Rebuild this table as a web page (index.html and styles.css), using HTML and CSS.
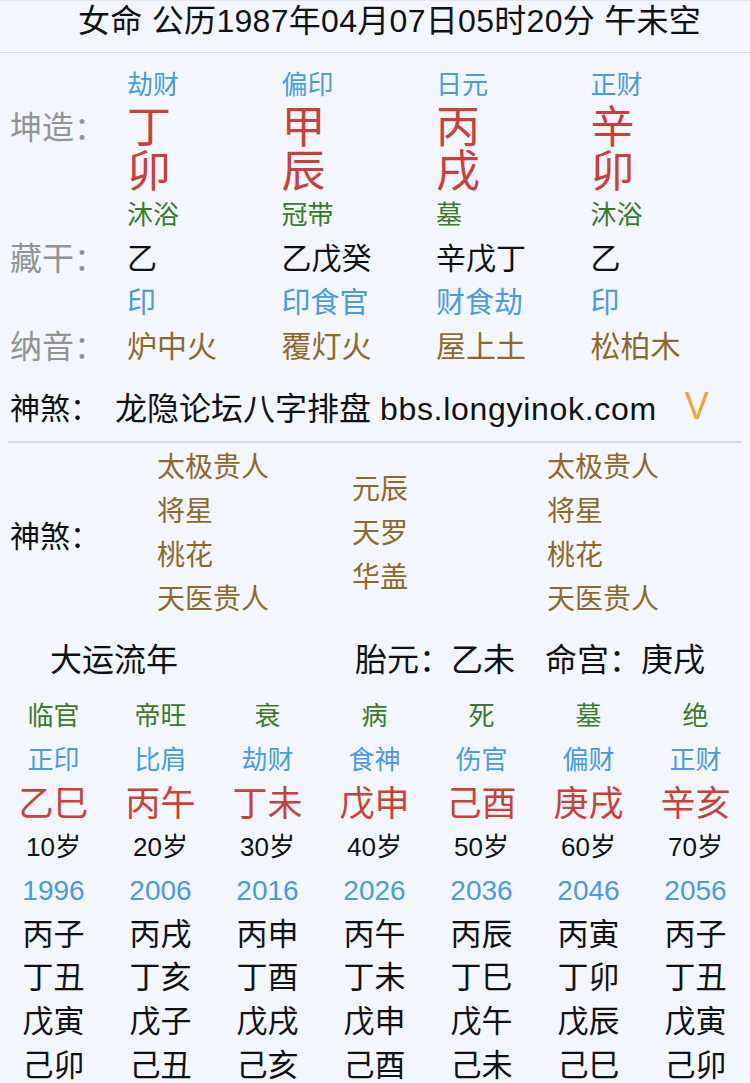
FILE: index.html
```html
<!DOCTYPE html>
<html lang="zh">
<head>
<meta charset="utf-8">
<title>八字排盘</title>
<link rel="stylesheet" href="styles.css">
</head>
<body>
<div class="page">
  <header class="title">女命 公历1987年04月07日05时20分 午未空</header>

  <section class="pillars">
    <div class="row r1">
      <div class="lbl"></div>
      <div class="c blue">劫财</div><div class="c blue">偏印</div><div class="c blue">日元</div><div class="c blue">正财</div>
    </div>
    <div class="row r2">
      <div class="lbl gray">坤造：</div>
      <div class="c red big">丁</div><div class="c red big">甲</div><div class="c red big">丙</div><div class="c red big">辛</div>
    </div>
    <div class="row r3">
      <div class="lbl"></div>
      <div class="c red big">卯</div><div class="c red big">辰</div><div class="c red big">戌</div><div class="c red big">卯</div>
    </div>
    <div class="row r4">
      <div class="lbl"></div>
      <div class="c green">沐浴</div><div class="c green">冠带</div><div class="c green">墓</div><div class="c green">沐浴</div>
    </div>
    <div class="row r5">
      <div class="lbl gray">藏干：</div>
      <div class="c black">乙</div><div class="c black">乙戊癸</div><div class="c black">辛戊丁</div><div class="c black">乙</div>
    </div>
    <div class="row r6">
      <div class="lbl"></div>
      <div class="c blue">印</div><div class="c blue">印食官</div><div class="c blue">财食劫</div><div class="c blue">印</div>
    </div>
    <div class="row r7">
      <div class="lbl gray">纳音：</div>
      <div class="c brown">炉中火</div><div class="c brown">覆灯火</div><div class="c brown">屋上土</div><div class="c brown">松柏木</div>
    </div>
  </section>

  <div class="link-row">
    <span class="link-lbl">神煞：</span>
    <span class="link-text">龙隐论坛八字排盘 <span class="url">bbs.longyinok.com</span></span>
    <span class="toggle">V</span>
  </div>

  <hr class="divider">

  <section class="shensha">
    <div class="ss-lbl">神煞：</div>
    <div class="ss-col">
      <div>太极贵人</div><div>将星</div><div>桃花</div><div>天医贵人</div>
    </div>
    <div class="ss-col">
      <div>元辰</div><div>天罗</div><div>华盖</div>
    </div>
    <div class="ss-col">
      <div>太极贵人</div><div>将星</div><div>桃花</div><div>天医贵人</div>
    </div>
  </section>

  <div class="dayun-head">
    <span class="dy-title">大运流年</span>
    <span class="dy-info">胎元：乙未<span class="sp"></span>命宫：庚戌</span>
  </div>

  <section class="grid">
    <div class="g green">临官</div><div class="g green">帝旺</div><div class="g green">衰</div><div class="g green">病</div><div class="g green">死</div><div class="g green">墓</div><div class="g green">绝</div>
    <div class="g blue">正印</div><div class="g blue">比肩</div><div class="g blue">劫财</div><div class="g blue">食神</div><div class="g blue">伤官</div><div class="g blue">偏财</div><div class="g blue">正财</div>
    <div class="g red gz">乙巳</div><div class="g red gz">丙午</div><div class="g red gz">丁未</div><div class="g red gz">戊申</div><div class="g red gz">己酉</div><div class="g red gz">庚戌</div><div class="g red gz">辛亥</div>
    <div class="g black">10岁</div><div class="g black">20岁</div><div class="g black">30岁</div><div class="g black">40岁</div><div class="g black">50岁</div><div class="g black">60岁</div><div class="g black">70岁</div>
    <div class="g blue yr">1996</div><div class="g blue yr">2006</div><div class="g blue yr">2016</div><div class="g blue yr">2026</div><div class="g blue yr">2036</div><div class="g blue yr">2046</div><div class="g blue yr">2056</div>
    <div class="g black ln">丙子</div><div class="g black ln">丙戌</div><div class="g black ln">丙申</div><div class="g black ln">丙午</div><div class="g black ln">丙辰</div><div class="g black ln">丙寅</div><div class="g black ln">丙子</div>
    <div class="g black ln">丁丑</div><div class="g black ln">丁亥</div><div class="g black ln">丁酉</div><div class="g black ln">丁未</div><div class="g black ln">丁巳</div><div class="g black ln">丁卯</div><div class="g black ln">丁丑</div>
    <div class="g black ln">戊寅</div><div class="g black ln">戊子</div><div class="g black ln">戊戌</div><div class="g black ln">戊申</div><div class="g black ln">戊午</div><div class="g black ln">戊辰</div><div class="g black ln">戊寅</div>
    <div class="g black ln">己卯</div><div class="g black ln">己丑</div><div class="g black ln">己亥</div><div class="g black ln">己酉</div><div class="g black ln">己未</div><div class="g black ln">己巳</div><div class="g black ln">己卯</div>
  </section>
</div>
</body>
</html>
```

FILE: styles.css
```css
html, body {
  margin: 0;
  padding: 0;
  background: #f3f7fd;
}
body {
  font-family: "Liberation Sans", "Noto Sans CJK SC", sans-serif;
  color: #111;
  overflow: hidden;
}
.page {
  width: 750px;
  height: 1083px;
  overflow: hidden;
}

.red { color: #c8413b; }
.blue { color: #4a9ae6; }
.green { color: #3a7a2c; }
.brown { color: #8c6a2e; }
.gray { color: #939393; }
.black { color: #111; }

.title {
  border-top: 1px solid #e4e7eb;
  border-bottom: 1px solid #d9dcdf;
  line-height: 40px;
  font-size: 32px;
  letter-spacing: 0.3px;
  padding-left: 78px;
  box-sizing: border-box;
  height: 53px;
  white-space: nowrap;
}

.pillars {
  padding-top: 11px;
}
.row {
  display: grid;
  grid-template-columns: 117px repeat(4, 154.5px);
  padding-left: 10px;
  align-items: center;
  white-space: nowrap;
}
.r1 { height: 42px; }
.r2 { height: 44px; }
.r3 { height: 44px; }
.r4 { height: 42px; }
.r5 { height: 46px; }
.r6 { height: 42px; }
.r7 { height: 46px; }
.c {
  font-size: 26px;
  line-height: 1;
}
.r5 .c, .r7 .c { font-size: 30px; }
.r6 .c { font-size: 29px; }
.c.big {
  font-size: 44px;
  line-height: 44px;
}
.lbl {
  font-size: 32px;
  line-height: 1;
}

.link-row {
  height: 71px;
  display: flex;
  align-items: center;
  padding-left: 10px;
  font-size: 30px;
  white-space: nowrap;
}
.link-lbl { width: 105px; }
.link-text { font-size: 32px; }
.url { letter-spacing: 0.7px; }
.toggle {
  margin-left: 27px;
  color: #f0a23a;
  font-size: 38px;
  line-height: 1;
  display: inline-block;
  transform: scaleX(0.95);
}

.divider {
  margin: 0 8px;
  border: 0;
  border-top: 2px solid #d6d9de;
  height: 0;
}

.shensha {
  display: flex;
  align-items: center;
  padding-top: 3px;
  padding-left: 10px;
}
.ss-lbl {
  width: 147px;
  font-size: 30px;
}
.ss-col {
  width: 195px;
  color: #8c6a2e;
  font-size: 28px;
  line-height: 44px;
}

.dayun-head {
  display: flex;
  align-items: center;
  height: 44px;
  margin-top: 13px;
  font-size: 32px;
  white-space: nowrap;
}
.dy-title {
  padding-left: 50px;
  width: 305px;
}
.dy-info .sp {
  display: inline-block;
  width: 30px;
}

.grid {
  margin-top: 15px;
  display: grid;
  grid-template-columns: repeat(7, 107px);
  grid-auto-rows: 43.7px;
  align-items: center;
}
.g {
  text-align: center;
  font-size: 26px;
  line-height: 1;
  white-space: nowrap;
}
.g.gz { font-size: 35px; }
.g.yr { font-size: 28px; }
.g.ln { font-size: 31px; }
```
